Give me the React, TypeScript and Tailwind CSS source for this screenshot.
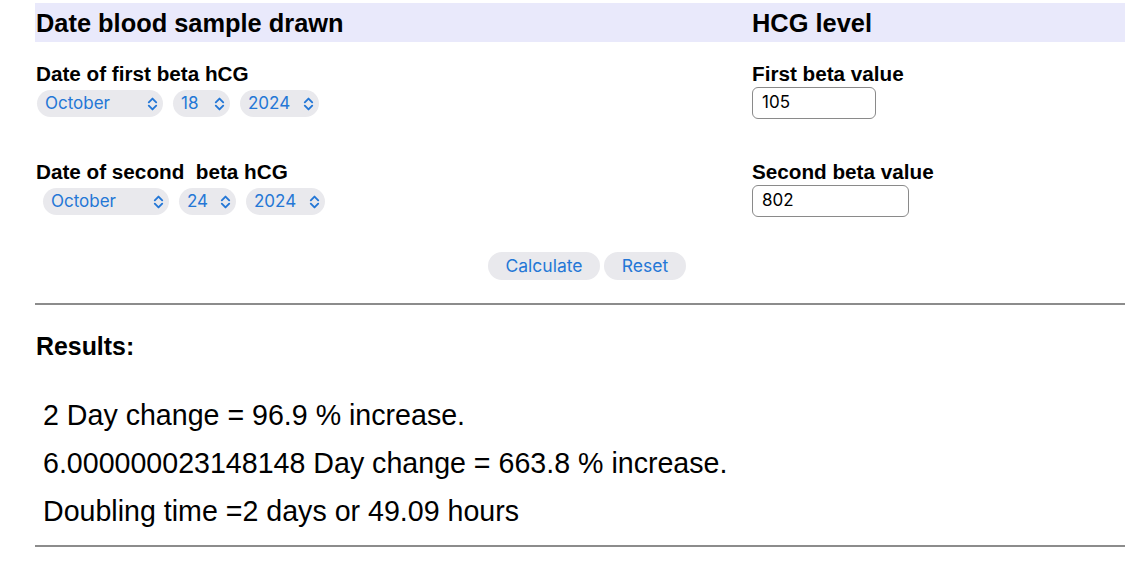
const Chevrons = () => (
  <svg width="11" height="14" viewBox="0 0 11 14" fill="none" className="shrink-0">
    <path d="M1.8 5.3 L5.5 1.6 L9.2 5.3" stroke="#2477d6" strokeWidth="1.9" strokeLinecap="round" strokeLinejoin="round" />
    <path d="M1.8 8.7 L5.5 12.4 L9.2 8.7" stroke="#2477d6" strokeWidth="1.9" strokeLinecap="round" strokeLinejoin="round" />
  </svg>
);

const Select = ({ value, width }: { value: string; width: string }) => (
  <div
    className={`flex h-[27px] items-center justify-between rounded-full bg-[#e9e9ed] pr-[5px] pl-[8px] text-[17px] text-[#2477d6] ${width}`}
    style={{ fontFamily: "Inter, 'Noto Sans', sans-serif" }}>
    <span>{value}</span>
    <Chevrons />
  </div>
);

const DateRow = ({ month, day, year }: { month: string; day: string; year: string }) => (
  <div className="mt-[5px] flex gap-[10px]">
    <Select value={month} width="w-[126px]" />
    <Select value={day} width="w-[57px]" />
    <Select value={year} width="w-[79px]" />
  </div>
);

const Field = ({ value, width }: { value: string; width: string }) => (
  <div
    className={`mt-[2px] flex h-[32px] items-center rounded-[6px] border border-[#8a8a8a] pl-[9px] text-[17px] text-black ${width}`}
    style={{ fontFamily: "Inter, 'Noto Sans', sans-serif" }}>
    {value}
  </div>
);

export default function App() {
  return (
    <div
      className="h-[572px] w-full overflow-hidden bg-white pl-[35px] text-black"
      style={{ fontFamily: "'Liberation Sans', Arial, sans-serif" }}>
      {/* section header */}
      <div className="mt-[3px] flex h-[39px] items-center bg-[#e9e9fb] pt-[2px] text-[25.4px] font-bold">
        <div className="w-[717px] pl-px">Date blood sample drawn</div>
        <div>HCG level</div>
      </div>

      {/* first sample */}
      <div className="mt-[20px] flex items-start">
        <div className="w-[717px]">
          <div className="pl-px text-[20.7px] leading-[23px] font-bold">Date of first beta hCG</div>
          <div className="pl-[2px]">
            <DateRow month="October" day="18" year="2024" />
          </div>
        </div>
        <div>
          <div className="text-[20.7px] leading-[23px] font-bold">First beta value</div>
          <Field value="105" width="w-[124px]" />
        </div>
      </div>

      {/* second sample */}
      <div className="mt-[41px] flex items-start">
        <div className="w-[717px]">
          <div className="pl-px text-[20.7px] leading-[23px] font-bold whitespace-pre">Date of second  beta hCG</div>
          <div className="pl-[8px]">
            <DateRow month="October" day="24" year="2024" />
          </div>
        </div>
        <div>
          <div className="text-[20.7px] leading-[23px] font-bold">Second beta value</div>
          <Field value="802" width="w-[157px]" />
        </div>
      </div>

      {/* actions */}
      <div
        className="mt-[35px] flex justify-center gap-[4px] pl-[14px] text-[17.5px] text-[#2477d6]"
        style={{ fontFamily: "Inter, 'Noto Sans', sans-serif" }}>
        <button className="flex h-[28px] w-[112px] items-center justify-center rounded-full bg-[#e9e9ed]">Calculate</button>
        <button className="flex h-[28px] w-[82px] items-center justify-center rounded-full bg-[#e9e9ed]">Reset</button>
      </div>

      <div className="mt-[23px] h-[2px] bg-[#8c8c8c]" />

      <div className="mt-[27px] pl-px text-[24.9px] leading-[28px] font-bold">Results:</div>

      <div className="mt-[31px] pl-[8px] text-[28.6px] leading-[48px]">
        <div>2 Day change = 96.9 % increase.</div>
        <div>6.000000023148148 Day change = 663.8 % increase.</div>
        <div>Doubling time =2 days or 49.09 hours</div>
      </div>

      <div className="mt-[10px] h-[2px] bg-[#8c8c8c]" />
    </div>
  );
}
